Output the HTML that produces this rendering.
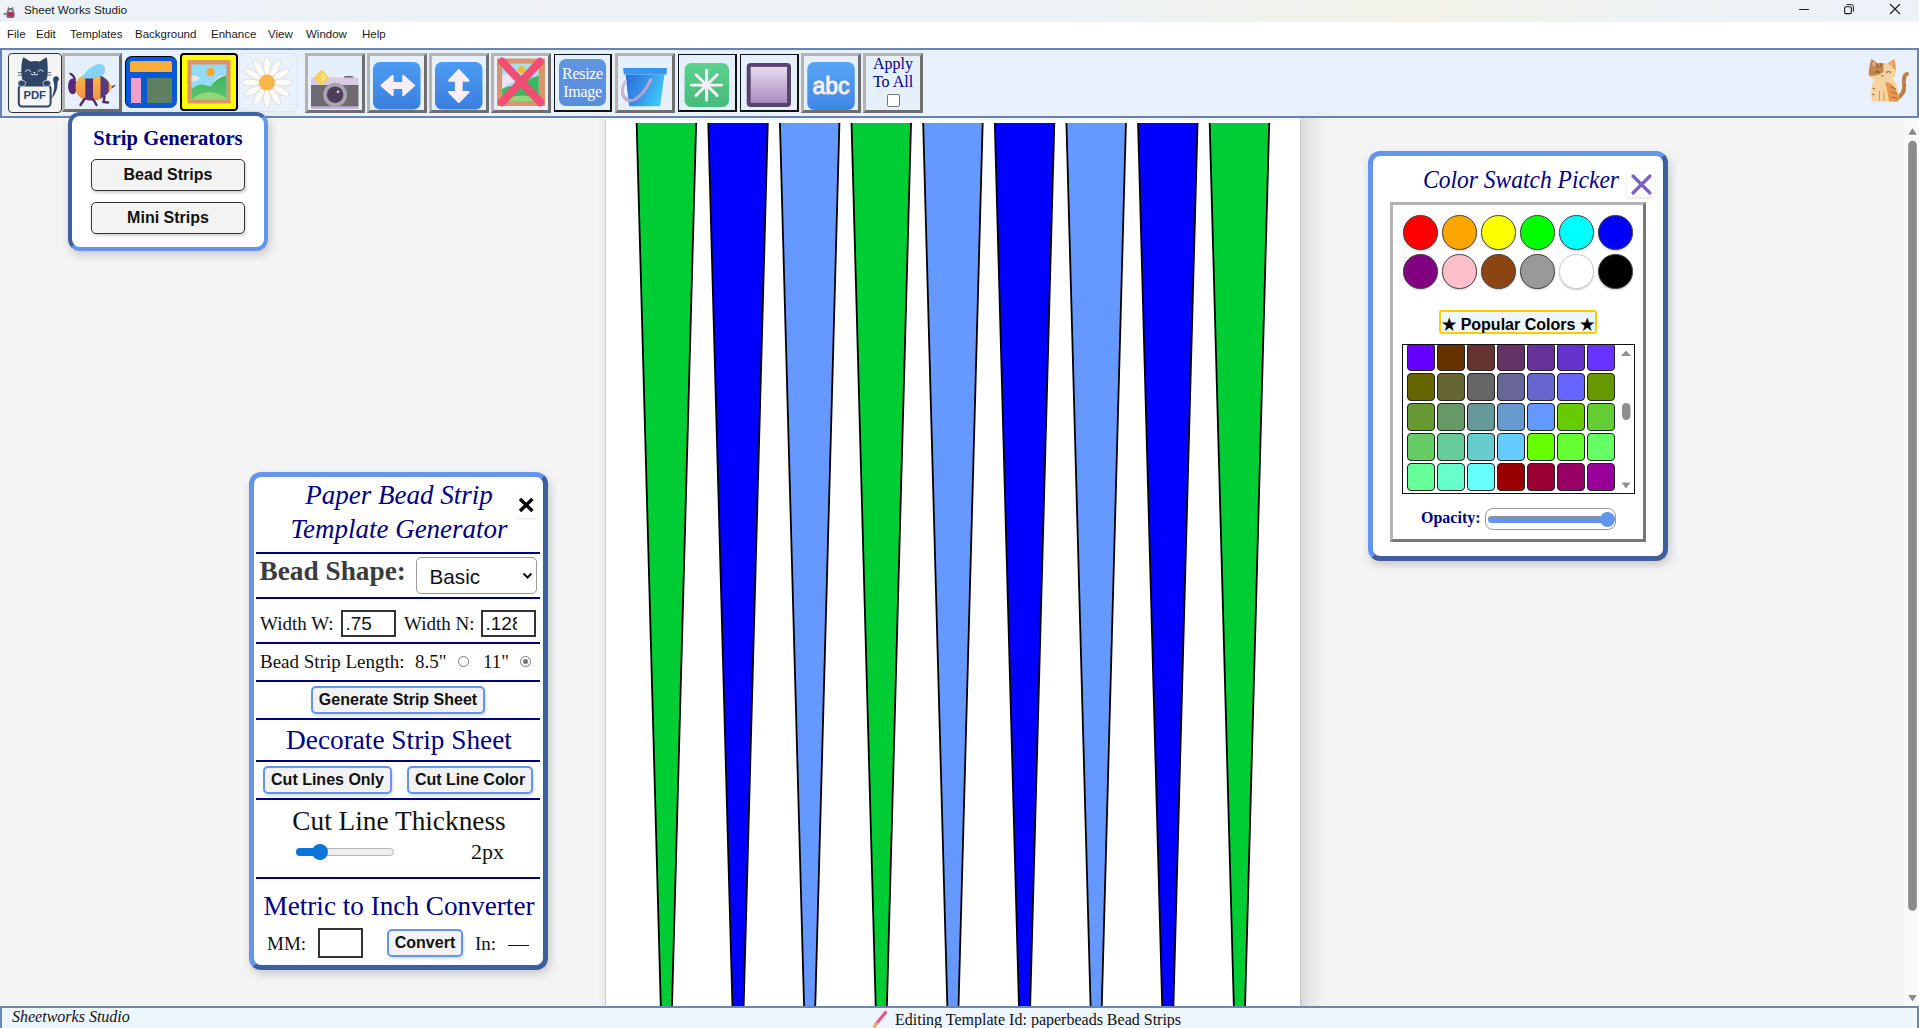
<!DOCTYPE html>
<html><head><meta charset="utf-8">
<style>
*{box-sizing:border-box;margin:0;padding:0}
html,body{width:1919px;height:1028px;overflow:hidden;background:#f4f4f4;font-family:"Liberation Sans",sans-serif;position:relative}
.abs{position:absolute}
#title{left:0;top:0;width:1919px;height:22px;background:linear-gradient(90deg,#edf2f8 0%,#eef2f6 55%,#f2f2e8 74%,#eef3f6 88%,#ecf2f8 100%)}
#title .t{left:24px;top:3px;font-size:11.7px;color:#1a1a1a}
#menu{left:0;top:22px;width:1919px;height:26px;background:#fff}
#menu span{position:absolute;top:5.5px;font-size:11.5px;color:#1a1a1a}
#toolbar{left:0;top:48px;width:1919px;height:70px;background:#e7f0fb;border:2px solid #6884ae}
.btn{position:absolute;top:53px;width:60px;height:60px;background:#e6f0fb}
.out{border:3px solid;border-color:#b3b3b3 #6e6e6e #6e6e6e #b3b3b3}
.blk{border:2px solid #111}
#page{left:605px;top:120px;width:696px;height:900px;background:#fff;border-left:1px solid #cfcfcf;border-right:1px solid #c4c4c4;overflow:hidden}
#pshl{left:598px;top:118px;width:7px;height:900px;background:linear-gradient(90deg,rgba(0,0,0,0),rgba(0,0,0,.045))}
#pshr{left:1301px;top:118px;width:32px;height:900px;background:linear-gradient(90deg,rgba(0,0,0,.11),rgba(0,0,0,.05) 30%,rgba(0,0,0,.015) 65%,rgba(0,0,0,0) 90%)}
#status{left:0;top:1006px;width:1919px;height:24px;background:#eef6fd;border:2px solid #6a87ad;border-bottom:none}
.serif{font-family:"Liberation Serif",serif}
.panel{position:absolute;background:#fff;border-radius:12px;box-shadow:2px 4px 10px rgba(0,0,0,.18)}
.hr{position:absolute;height:2px;background:#000080}
.pbtn{position:absolute;background:#f2f2f2;border:2px solid #6495ed;border-radius:5px;font-weight:bold;font-size:16px;color:#111;text-align:center;box-shadow:1px 2px 3px rgba(0,0,0,.15)}
</style></head><body>
<div id="title" class="abs">
  <div class="abs t">Sheet Works Studio</div>
</div>
<div id="menu" class="abs">
  <span style="left:7px">File</span>
  <span style="left:36px">Edit</span>
  <span style="left:70px">Templates</span>
  <span style="left:135px">Background</span>
  <span style="left:211px">Enhance</span>
  <span style="left:268px">View</span>
  <span style="left:306px">Window</span>
  <span style="left:362px">Help</span>
</div>
<div id="toolbar" class="abs"></div>
<!-- PDF cat -->
<div class="abs" style="left:8px;top:53px;width:54px;height:60px;background:#f4f4f4;border:1.5px solid #333;border-radius:4px"></div>
<svg class="abs" style="left:8px;top:53px" width="54" height="60" viewBox="0 0 54 60">
 <g fill="#2e4566">
  <path d="M17.8,32 C14.5,29.5 13.2,24 13.3,18 C13.3,13 13.8,8 14.9,5 C15.2,4.3 15.8,4.3 16.3,4.7 L22.5,8.5 C25.5,7.7 28.8,7.7 31.8,8.5 L37.5,4.7 C38,4.3 38.6,4.4 38.8,5 C39.6,8 39.8,13 39.7,18 C39.8,24 38.5,29.5 35.4,32 Z"/>
  <ellipse cx="13.8" cy="30.6" rx="3.8" ry="3.3"/>
  <ellipse cx="38.7" cy="30.6" rx="3.8" ry="3.3"/>
  <path d="M42.8,46 C46.5,39 46.8,33 45.5,28.5 C44.2,25.5 46.5,22.5 49.2,23.5 C51.5,24.5 51.5,27.5 49.5,28.5 C49.8,34 48.5,41 42.8,46 Z"/>
 </g>
 <g fill="none" stroke="#c9ced8" stroke-width="1.1" stroke-linecap="round">
  <path d="M17.6,18.3 Q20,15.2 22.4,18.3"/><path d="M30.3,18.3 Q32.7,15.2 35.1,18.3"/>
  <path d="M23.2,21 Q24.8,22.6 26.4,21.2 Q28,22.6 29.6,21"/>
 </g>
 <path d="M25.2,19 L27.6,19 L26.4,21 Z" fill="#e0e4ea"/>
 <g stroke="#2e4566" stroke-width="0.8"><path d="M9.8,19.5 L13.5,19.7 M9.8,22.3 L13.5,21.9 M39.5,19.7 L43.2,19.5 M39.5,21.9 L43.2,22.3"/></g>
 <rect x="10.8" y="32.6" width="31.8" height="20.8" rx="3.2" fill="#f4f4f4" stroke="#2e4566" stroke-width="2"/>
 <ellipse cx="13.8" cy="30.4" rx="3.9" ry="3.1" fill="#2e4566" stroke="#f4f4f4" stroke-width="0.7"/>
 <ellipse cx="38.7" cy="30.4" rx="3.9" ry="3.1" fill="#2e4566" stroke="#f4f4f4" stroke-width="0.7"/>
 <text x="26.7" y="45.6" text-anchor="middle" font-family="Liberation Sans" font-weight="bold" font-size="11.3" fill="#2e4566">PDF</text>
</svg>
<!-- bee -->
<div class="btn out" style="left:62px;width:60px;height:59px;top:53px"></div>
<svg class="abs" style="left:62px;top:53px" width="60" height="60" viewBox="0 0 60 60">
 <defs>
  <linearGradient id="by" x1="0" y1="0" x2="0" y2="1"><stop offset="0" stop-color="#f7c23c"/><stop offset="1" stop-color="#f48a50"/></linearGradient>
  <clipPath id="bc"><path d="M13.5,34 C13.5,25 20,21 30,21 C40,21 45,26 50.5,34 C45,42 40,47.5 30,47.5 C20,47.5 13.5,43 13.5,34 Z"/></clipPath>
 </defs>
 <path d="M8.4,20.7 Q11.5,22 12.9,26" stroke="#4a2a6a" stroke-width="2.2" fill="none" stroke-linecap="round"/>
 <ellipse cx="10.6" cy="33.3" rx="4.6" ry="7.9" fill="#5a2a7a"/>
 <g clip-path="url(#bc)">
  <rect x="10" y="18" width="45" height="32" fill="url(#by)"/>
  <rect x="23.3" y="18" width="7.7" height="32" fill="#54307a"/>
  <rect x="38.5" y="18" width="8.2" height="32" fill="#5a3a78"/>
 </g>
 <path d="M50,33 L54,31.5 L50.5,35.5 Z" fill="#4a2a6a"/>
 <path d="M20,25 C23,18 30,12 37,11 C42.5,10.5 44,14.5 42.5,19.5 C40.5,24.5 30,26.5 20,25 Z" fill="#84d2f6"/>
 <g stroke="#4a2a6a" stroke-width="2.4" stroke-linecap="round" fill="none">
  <path d="M22.5,46 L18.5,52"/><path d="M31,46 L34.5,52"/><path d="M42.5,44 L41.5,49 L46,49.5"/>
 </g>
</svg>
<!-- layout -->
<div class="abs" style="left:125px;top:56px;width:52px;height:52px;background:#0a58d6;border-radius:7px;border-left:1px solid #000;border-top:1px solid #000"></div>
<div class="abs" style="left:130px;top:61px;width:42px;height:11px;background:#f9ac3a;border-radius:2px 2px 0 0"></div>
<div class="abs" style="left:130.5px;top:77.5px;width:10.5px;height:25px;background:#f0a0c8"></div>
<div class="abs" style="left:146.5px;top:77.5px;width:25.5px;height:25px;background:#5e8060"></div>
<!-- image yellow -->
<div class="abs" style="left:180px;top:53px;width:58px;height:58px;background:#ffff00;border:2.5px solid #000;border-radius:4px"></div>
<svg class="abs" style="left:187px;top:60px" width="44" height="44" viewBox="0 0 44 44">
 <defs><linearGradient id="hill" x1="0" y1="0" x2="0" y2="1"><stop offset="0" stop-color="#3fb660"/><stop offset="1" stop-color="#5cc46f"/></linearGradient></defs>
 <rect x="0.5" y="0" width="43" height="43.5" fill="#dc946c"/>
 <rect x="4.5" y="4.5" width="35" height="35" fill="#92dcf5"/>
 <circle cx="23.5" cy="12" r="4" fill="#f7a72a"/>
 <path d="M4.5,16 Q9,14 13,18 Q10,22 4.5,21 Z" fill="#ece3f3"/>
 <path d="M27,21 Q32,14 39.5,16 L39.5,20 Q33,19 29,24 Z" fill="#ece3f3"/>
 <path d="M4.5,29 Q12,23 18,25 Q22,27 24,26 Q30,17 39.5,15.5 L39.5,39.5 L4.5,39.5 Z" fill="url(#hill)"/>
 <path d="M4.5,39.5 Q20,26 39.5,38 L39.5,39.5 Z" fill="#8ed878"/>
</svg>
<!-- daisy -->
<div class="abs" style="left:240px;top:53.5px;width:56px;height:57.5px;background:#e9f1fb;border-radius:4px;box-shadow:0 0 2px rgba(0,0,0,.15)"></div>
<svg class="abs" style="left:240px;top:54px" width="56" height="58" viewBox="0 0 56 58">
 <g transform="translate(27,28.6)" fill="#fdfbf7" stroke="#d8d4d4" stroke-width="0.7">
  <ellipse cx="0" cy="-16" rx="3.4" ry="9.5"/>
  <ellipse cx="0" cy="-16" rx="3.4" ry="9.5" transform="rotate(30)"/>
  <ellipse cx="0" cy="-16" rx="3.4" ry="9.5" transform="rotate(60)"/>
  <ellipse cx="0" cy="-16" rx="3.4" ry="9.5" transform="rotate(90)"/>
  <ellipse cx="0" cy="-16" rx="3.4" ry="9.5" transform="rotate(120)"/>
  <ellipse cx="0" cy="-16" rx="3.4" ry="9.5" transform="rotate(150)"/>
  <ellipse cx="0" cy="-16" rx="3.4" ry="9.5" transform="rotate(180)"/>
  <ellipse cx="0" cy="-16" rx="3.4" ry="9.5" transform="rotate(210)"/>
  <ellipse cx="0" cy="-16" rx="3.4" ry="9.5" transform="rotate(240)"/>
  <ellipse cx="0" cy="-16" rx="3.4" ry="9.5" transform="rotate(270)"/>
  <ellipse cx="0" cy="-16" rx="3.4" ry="9.5" transform="rotate(300)"/>
  <ellipse cx="0" cy="-16" rx="3.4" ry="9.5" transform="rotate(330)"/>
  <circle r="8" fill="#f8b648" stroke="none"/>
 </g>
</svg>
<!-- camera -->
<div class="btn out" style="left:305px"></div>
<svg class="abs" style="left:305px;top:53px" width="60" height="60" viewBox="0 0 60 60">
 <rect x="39" y="23" width="9.5" height="3.5" rx="1.5" fill="#6d6470"/>
 <rect x="6" y="24.5" width="47.5" height="8.5" rx="2" fill="#d6cbe0"/>
 <rect x="6" y="32" width="47.5" height="21.8" fill="#6e6a72"/>
 <rect x="6" y="53.5" width="47.5" height="2.5" rx="1" fill="#c8b3dc"/>
 <circle cx="30.1" cy="41.7" r="12" fill="#aaa4b0"/>
 <circle cx="30.1" cy="41.7" r="8.3" fill="#4d3f5c"/>
 <circle cx="33" cy="38.8" r="1.3" fill="#e8e0f0"/>
 <path d="M16.5,17.8 L23.5,24.8 L16.5,31.8 L9.5,24.8 Z" fill="#f5d05a" stroke="#f5d05a" stroke-width="1.6" stroke-linejoin="round"/><path d="M16.5,19.5 L21.5,24.8 L16.5,30 Z" fill="#f9e07a"/>
</svg>
<!-- LR arrows -->
<div class="btn out" style="left:367px"></div>
<svg class="abs" style="left:367px;top:53px" width="60" height="60" viewBox="0 0 60 60">
 <defs><linearGradient id="bl" x1="0" y1="0" x2="0" y2="1"><stop offset="0" stop-color="#4b9cf2"/><stop offset="1" stop-color="#3a7fe0"/></linearGradient></defs>
 <rect x="6" y="9" width="47.5" height="47.5" rx="7" fill="url(#bl)"/>
 <path d="M14.5,32.5 L25.5,23 L25.5,30.2 L36.3,30.2 L36.3,23 L47,32.5 L36.3,42 L36.3,35 L25.5,35 L25.5,42 Z" fill="#fbeef6" stroke="#fbeef6" stroke-width="2.2" stroke-linejoin="round"/>
</svg>
<!-- UD arrows -->
<div class="btn out" style="left:429px"></div>
<svg class="abs" style="left:429px;top:53px" width="60" height="60" viewBox="0 0 60 60">
 <rect x="6" y="9" width="47.5" height="47.5" rx="7" fill="url(#bl)"/>
 <path d="M29.8,17.2 L39.5,27.6 L32.6,27.6 L32.6,39 L39.5,39 L29.8,49 L20.1,39 L27,39 L27,27.6 L20.1,27.6 Z" fill="#fbeef6" stroke="#fbeef6" stroke-width="2.2" stroke-linejoin="round"/>
</svg>
<!-- X image -->
<div class="btn out" style="left:491px"></div>
<svg class="abs" style="left:491px;top:53px" width="60" height="60" viewBox="0 0 60 60">
 <rect x="6" y="5.5" width="48" height="47.5" fill="#dc946c"/>
 <rect x="11.2" y="10.6" width="36.5" height="37.6" fill="#a8def5"/>
 <path d="M11.2,22 Q20,18 30,24 L11.2,36 Z" fill="#e8e4f4"/>
 <circle cx="30.5" cy="16.6" r="3.6" fill="#f7b52a"/>
 <path d="M11.2,36 Q20,31 27,34 Q36,26 47.7,22.5 L47.7,48.2 L11.2,48.2 Z" fill="#3fb660"/>
 <path d="M11.2,48.2 Q28,38 47.7,46 L47.7,48.2 Z" fill="#8ed878"/>
 <path d="M11,8.6 L49.3,49.3 M48.8,8.8 L11,49.3" stroke="#f24d72" stroke-width="8" stroke-linecap="round"/>
</svg>
<!-- resize -->
<div class="abs blk" style="left:553.5px;top:54px;width:58.5px;height:58px;background:#e6f0fb;border-width:1px 2px 2px 1px"></div>
<div class="abs serif" style="left:559px;top:58.5px;width:47px;height:47px;background:linear-gradient(180deg,#6095e3,#5a8ddc);border-radius:7px;color:#fff;font-size:16px;line-height:18px;text-align:center;padding-top:6.5px;letter-spacing:-0.3px">Resize<br>Image</div>
<!-- bucket -->
<div class="btn out" style="left:615px"></div>
<svg class="abs" style="left:615px;top:53px" width="60" height="60" viewBox="0 0 60 60">
 <defs><linearGradient id="bk" x1="0" y1="0" x2="1" y2="0.35"><stop offset="0" stop-color="#2a6ed6"/><stop offset="0.5" stop-color="#3690e6"/><stop offset="1" stop-color="#3fc4f8"/></linearGradient>
 <linearGradient id="bh" x1="0" y1="0" x2="1" y2="1"><stop offset="0" stop-color="#d0c4d8"/><stop offset="1" stop-color="#b08ec8"/></linearGradient></defs>
 <path d="M10.6,21.6 L49.5,21.6 L45,53.3 L14.1,53.3 Z" fill="url(#bk)"/>
 <path d="M8,15 L52,15 L51.5,21.6 L8.8,21.6 Z" fill="#3a96ea"/>
 <path d="M35.9,26.7 C32,35 28,42 20,46.5 C14,49.5 8.5,46 7.5,40 C7,35 8.5,31 10.6,28.6" stroke="url(#bh)" stroke-width="3" fill="none" stroke-linecap="round"/>
</svg>
<!-- asterisk -->
<div class="abs blk" style="left:678px;top:54px;width:58.5px;height:58px;background:#e6f0fb;border-width:1px 2px 2px 1px"></div>
<svg class="abs" style="left:678px;top:54px" width="59" height="58" viewBox="0 0 59 58">
 <defs><linearGradient id="gr" x1="0" y1="0" x2="0" y2="1"><stop offset="0" stop-color="#5cd08e"/><stop offset="1" stop-color="#46bb7c"/></linearGradient></defs>
 <rect x="6.6" y="9" width="44.5" height="44" rx="6.5" fill="url(#gr)"/>
 <g stroke="#fdeef8" stroke-width="2.9" stroke-linecap="round">
  <path d="M28.6,16.3 L28.6,46.3 M13.6,31.1 L43.6,31.1 M18,20.8 L39.2,41.4 M39.2,20.8 L18,41.4"/>
 </g>
</svg>
<!-- square -->
<div class="abs blk" style="left:740px;top:54px;width:58.5px;height:58px;background:#e6f0fb;border-width:1px 2px 2px 1px"></div>
<svg class="abs" style="left:740px;top:54px" width="59" height="58" viewBox="0 0 59 58">
 <defs><linearGradient id="sq" x1="0" y1="0" x2="0" y2="1"><stop offset="0" stop-color="#e8dcee"/><stop offset="1" stop-color="#a98cc2"/></linearGradient></defs>
 <rect x="6.7" y="8.9" width="44.3" height="44" rx="4" fill="#57436e"/>
 <rect x="10.7" y="12.9" width="36.3" height="36" fill="url(#sq)"/>
</svg>
<!-- abc -->
<div class="btn out" style="left:801px"></div>
<svg class="abs" style="left:801px;top:53px" width="60" height="60" viewBox="0 0 60 60">
 <defs><linearGradient id="ab" x1="0" y1="0" x2="0" y2="1"><stop offset="0" stop-color="#58a6f6"/><stop offset="1" stop-color="#3f86e6"/></linearGradient></defs>
 <rect x="6.3" y="9" width="47.5" height="48" rx="7" fill="url(#ab)"/>
 <text x="30" y="40.6" text-anchor="middle" font-family="Liberation Sans" font-size="23" fill="#fdf0f6" stroke="#fdf0f6" stroke-width="0.9">abc</text>
</svg>
<!-- apply to all -->
<div class="btn out" style="left:863px"></div>
<div class="abs serif" style="left:863px;top:54.5px;width:60px;text-align:center;font-size:16px;line-height:18px;color:#000080">Apply<br>To All</div>
<div class="abs" style="left:887px;top:94px;width:13px;height:13px;border:1px solid #767676;border-radius:2px;background:#fff"></div>
<!-- cat right -->
<svg class="abs" style="left:1862px;top:54px" width="50" height="52" viewBox="0 0 50 52">
 <path d="M33,45 C40,43 43,36 42,30 C41.3,25 42,21 45,20" stroke="#c0844a" stroke-width="4" fill="none" stroke-linecap="round"/>
 <path d="M40.5,38 L43.5,37 M41.5,31 L44,30.5 M41.5,25 L44,24.5" stroke="#9a6030" stroke-width="1"/>
 <path d="M10,47.5 C8.5,40 9,32 12.5,25 L31,25 C35.5,30 37,40 36.5,47.5 Z" fill="#f6d3a0"/>
 <path d="M23,28 C32,28 36.5,38 36.5,47.5 L27,47.5 C26,40 24.5,33 23,28 Z" fill="#e8964e"/>
 <path d="M29,33 L34,35 M30,38 L35.5,40 M30,43 L36,44.5 M10.5,34 L13,35 M10,40 L12.5,41" stroke="#a86a38" stroke-width="1.1"/>
 <path d="M17.5,37 L17.5,47 M22,37 L22,47" stroke="#c8925a" stroke-width="0.9"/>
 <path d="M6.8,19.4 C6.8,14 8,10 9.5,5 L16,9.5 C19,8.8 23,8.8 26,9.5 L32.2,5 C33.5,10 33.8,14 33.8,19.4 C33.5,24 28,26.5 20.3,26.5 C12.5,26.5 7,24 6.8,19.4 Z" fill="#f4d3a2"/>
 <path d="M6.8,19.4 C6.8,14 8,10 9.5,5 L16,9.5 C18,9 20,9 21.5,9.2 L21.5,18 Q16,22 7.2,22 Z" fill="#c08850"/>
 <path d="M26,9.5 L32.2,5 C33.5,10 33.8,14 33.6,17 C31,13.5 28.5,11 26,9.5 Z" fill="#ec9a50"/>
 <path d="M10.5,7.5 L14,10 L11,13 Z M31,7.5 L27.8,10 L30.8,13 Z" fill="#f0b0a0"/>
 <path d="M15,10 L16,14 M18.5,9.5 L19,13" stroke="#8a5a30" stroke-width="1"/>
 <path d="M13,18.5 Q15.5,16.5 18,18.5 M24,18.5 Q26.5,16.5 29,18.5" stroke="#6a4020" stroke-width="0.9" fill="none"/>
 <path d="M19,21.5 Q20.3,23 21.6,21.5" stroke="#6a4020" stroke-width="0.9" fill="none"/>
</svg>
<div id="pshl" class="abs"></div><div id="pshr" class="abs"></div><div id="page" class="abs"><svg class="abs" style="left:-1px;top:3px" width="695" height="897" viewBox="0 0 695 897"><g stroke="#000" stroke-width="1.8"><polygon points="31.51,-5 91.29,-5 64.18,986 58.62,986" fill="#00cc33"/>
<polygon points="103.14,-5 162.92,-5 135.81,986 130.25,986" fill="#0000ff"/>
<polygon points="174.77,-5 234.55,-5 207.44,986 201.88,986" fill="#6699ff"/>
<polygon points="246.40,-5 306.18,-5 279.07,986 273.51,986" fill="#00cc33"/>
<polygon points="318.03,-5 377.81,-5 350.70,986 345.14,986" fill="#6699ff"/>
<polygon points="389.66,-5 449.44,-5 422.33,986 416.77,986" fill="#0000ff"/>
<polygon points="461.29,-5 521.07,-5 493.96,986 488.40,986" fill="#6699ff"/>
<polygon points="532.92,-5 592.70,-5 565.59,986 560.03,986" fill="#0000ff"/>
<polygon points="604.55,-5 664.33,-5 637.22,986 631.66,986" fill="#00cc33"/></g></svg></div>
<!-- strip generators -->
<div class="panel" style="left:68px;top:112px;width:200px;height:139px;border:4.5px solid;border-color:#3f62a0 #6495ed #6495ed #3f62a0"></div>
<div class="abs serif" style="left:68px;top:127px;width:200px;text-align:center;font-weight:bold;font-size:20.6px;color:#000080">Strip Generators</div>
<div class="abs" style="left:91px;top:159px;width:154px;height:32px;background:#f3f3f3;border:1px solid #333;border-radius:5px;box-shadow:1px 2px 3px rgba(0,0,0,.18);font-weight:bold;font-size:16px;line-height:29px;text-align:center;color:#111">Bead Strips</div>
<div class="abs" style="left:91px;top:202px;width:154px;height:32px;background:#f3f3f3;border:1px solid #333;border-radius:5px;box-shadow:1px 2px 3px rgba(0,0,0,.18);font-weight:bold;font-size:16px;line-height:29px;text-align:center;color:#111">Mini Strips</div>

<!-- bead generator panel -->
<div class="panel" style="left:249px;top:472px;width:299px;height:498px;border:5px solid;border-color:#6495ed #3d5f9c #3d5f9c #6495ed"></div>
<div class="abs serif" style="left:254px;top:478px;width:290px;text-align:center;font-style:italic;font-size:27px;line-height:34px;color:#000080;padding-right:0px">Paper Bead Strip<br>Template Generator</div>
<div class="abs" style="left:516.5px;top:490px;width:19px;height:28px;background:#fff;border-radius:2px;box-shadow:0 1px 2px rgba(0,0,0,.12)"></div><svg class="abs" style="left:516px;top:490px" width="20" height="28" viewBox="0 0 20 28"><path d="M4,9 L16.4,21 M16.4,9 L4,21" stroke="#000" stroke-width="3.3"/></svg>
<div class="hr" style="left:256px;top:552px;width:284px"></div>
<div class="abs serif" style="left:259.5px;top:555.5px;font-weight:bold;font-size:27.3px;color:#3c3c3c">Bead Shape:</div>
<div class="abs" style="left:416px;top:557px;width:121px;height:37px;border:1px solid #9a9a9a;border-radius:5px;background:#fff;font-size:20.7px;line-height:37px;padding-left:12.5px;color:#111">Basic
 <svg class="abs" style="right:3px;top:14px" width="11" height="8" viewBox="0 0 11 8"><path d="M1.5,1.5 L5.5,5.5 L9.5,1.5" stroke="#111" stroke-width="2" fill="none"/></svg>
</div>
<div class="hr" style="left:256px;top:597px;width:284px"></div>
<div class="abs serif" style="left:260px;top:613px;font-size:19px;color:#111">Width W:</div>
<div class="abs" style="left:341px;top:610px;width:55px;height:27px;border:2px solid #333;background:#fff;font-size:19px;line-height:24px;padding-left:2.5px;color:#111">.75</div>
<div class="abs serif" style="left:404px;top:613px;font-size:19px;color:#111">Width N:</div>
<div class="abs" style="left:481px;top:610px;width:55px;height:27px;border:2px solid #333;background:#fff;font-size:19px;line-height:24px;padding-left:2.5px;color:#111;overflow:hidden;white-space:nowrap"><div style="width:31.5px;overflow:hidden">.128</div></div>
<div class="hr" style="left:256px;top:642px;width:284px"></div>
<div class="abs serif" style="left:260px;top:651px;font-size:19px;color:#111;white-space:nowrap">Bead Strip Length:</div><div class="abs serif" style="left:415px;top:651px;font-size:19px;color:#111">8.5"</div>
<div class="abs" style="left:458px;top:656px;width:11px;height:11px;border:1px solid #767676;border-radius:50%;background:#fff"></div>
<div class="abs serif" style="left:483px;top:651px;font-size:19px;color:#111">11"</div>
<div class="abs" style="left:520px;top:656px;width:11px;height:11px;border:1px solid #767676;border-radius:50%;background:#fff"><div class="abs" style="left:2px;top:2px;width:5px;height:5px;border-radius:50%;background:#767676"></div></div>
<div class="hr" style="left:256px;top:680px;width:284px"></div>
<div class="pbtn" style="left:311px;top:686px;width:174px;height:28px;line-height:24px">Generate Strip Sheet</div>
<div class="hr" style="left:256px;top:718px;width:284px"></div>
<div class="abs serif" style="left:254px;top:725px;width:290px;text-align:center;font-size:27.3px;color:#000080">Decorate Strip Sheet</div>
<div class="hr" style="left:256px;top:760px;width:284px"></div>
<div class="pbtn" style="left:263px;top:766px;width:129px;height:28px;line-height:24px">Cut Lines Only</div>
<div class="pbtn" style="left:407px;top:766px;width:126px;height:28px;line-height:24px">Cut Line Color</div>
<div class="hr" style="left:256px;top:798px;width:284px"></div>
<div class="abs serif" style="left:254px;top:806px;width:290px;text-align:center;font-size:27.3px;color:#111">Cut Line Thickness</div>
<div class="abs" style="left:296px;top:848px;width:98px;height:8px;border:1px solid #b8b8b8;border-radius:4px;background:#efefef"></div>
<div class="abs" style="left:296px;top:848px;width:25px;height:8px;border-radius:4px 0 0 4px;background:#0b75d9"></div>
<div class="abs" style="left:312px;top:844px;width:16px;height:16px;border-radius:50%;background:#0b75d9"></div>
<div class="abs serif" style="left:471px;top:839px;font-size:22px;color:#111">2px</div>
<div class="hr" style="left:256px;top:877px;width:284px"></div>
<div class="abs serif" style="left:254px;top:891px;width:290px;text-align:center;font-size:27.2px;color:#000080;white-space:nowrap">Metric to Inch Converter</div>
<div class="abs serif" style="left:267px;top:932.5px;font-size:19px;color:#111">MM:</div>
<div class="abs" style="left:318px;top:928px;width:45px;height:30px;border:2px solid #333;background:#fff"></div>
<div class="pbtn" style="left:387px;top:929px;width:76px;height:28px;line-height:24px">Convert</div>
<div class="abs serif" style="left:475px;top:932.5px;font-size:19px;color:#111">In:</div>
<div class="abs" style="left:508px;top:945px;width:21px;height:1.3px;background:#111"></div>

<!-- color swatch picker -->
<div class="panel" style="left:1368px;top:151px;width:300px;height:410px;border:5px solid;border-color:#6495ed #3d5f9c #3d5f9c #6495ed"></div>
<div class="abs serif" style="left:1375.5px;top:165px;width:290px;text-align:center;font-style:italic;font-size:26px;color:#000080;transform:scaleX(0.905);transform-origin:145px 0">Color Swatch Picker</div>
<div class="abs" style="left:1627px;top:169px;width:28px;height:28px;background:#fff;border-radius:3px;box-shadow:0 1px 3px rgba(0,0,0,.15)"></div>
<svg class="abs" style="left:1627px;top:169px" width="28" height="28" viewBox="0 0 28 28"><path d="M6,7 L23,24 M23,7 L6,24" stroke="#7b5fcc" stroke-width="3.2" stroke-linecap="round"/></svg>
<div class="abs" style="left:1390px;top:202px;width:256px;height:340px;border:3px solid;border-color:#b4b4b4 #777 #777 #b4b4b4;background:#fff"></div>
<div class="abs" style="left:1403.3px;top:215px;width:34.5px;height:34.5px;border-radius:50%;background:#ff0000;border:1px solid #444;box-shadow:0 1px 2px rgba(0,0,0,.2)"></div>
<div class="abs" style="left:1442.3px;top:215px;width:34.5px;height:34.5px;border-radius:50%;background:#ffa500;border:1px solid #444;box-shadow:0 1px 2px rgba(0,0,0,.2)"></div>
<div class="abs" style="left:1481.3px;top:215px;width:34.5px;height:34.5px;border-radius:50%;background:#ffff00;border:1px solid #444;box-shadow:0 1px 2px rgba(0,0,0,.2)"></div>
<div class="abs" style="left:1520.3px;top:215px;width:34.5px;height:34.5px;border-radius:50%;background:#00ff00;border:1px solid #444;box-shadow:0 1px 2px rgba(0,0,0,.2)"></div>
<div class="abs" style="left:1559.3px;top:215px;width:34.5px;height:34.5px;border-radius:50%;background:#00ffff;border:1px solid #444;box-shadow:0 1px 2px rgba(0,0,0,.2)"></div>
<div class="abs" style="left:1598.3px;top:215px;width:34.5px;height:34.5px;border-radius:50%;background:#0000ff;border:1px solid #444;box-shadow:0 1px 2px rgba(0,0,0,.2)"></div>
<div class="abs" style="left:1403.3px;top:254px;width:34.5px;height:34.5px;border-radius:50%;background:#800080;border:1px solid #444;box-shadow:0 1px 2px rgba(0,0,0,.2)"></div>
<div class="abs" style="left:1442.3px;top:254px;width:34.5px;height:34.5px;border-radius:50%;background:#ffc0cb;border:1px solid #444;box-shadow:0 1px 2px rgba(0,0,0,.2)"></div>
<div class="abs" style="left:1481.3px;top:254px;width:34.5px;height:34.5px;border-radius:50%;background:#8b4513;border:1px solid #444;box-shadow:0 1px 2px rgba(0,0,0,.2)"></div>
<div class="abs" style="left:1520.3px;top:254px;width:34.5px;height:34.5px;border-radius:50%;background:#999999;border:1px solid #444;box-shadow:0 1px 2px rgba(0,0,0,.2)"></div>
<div class="abs" style="left:1559.3px;top:254px;width:34.5px;height:34.5px;border-radius:50%;background:#ffffff;border:1px solid #ccc;box-shadow:0 1px 2px rgba(0,0,0,.2)"></div>
<div class="abs" style="left:1598.3px;top:254px;width:34.5px;height:34.5px;border-radius:50%;background:#000000;border:1px solid #444;box-shadow:0 1px 2px rgba(0,0,0,.2)"></div>
<div class="abs" style="left:1439px;top:310px;width:158px;height:24px;border:2.5px solid #ffcc00;border-radius:3px;background:#eef6fd;font-weight:bold;font-size:16px;line-height:25px;text-align:center;color:#000;white-space:nowrap">&#x2605; Popular Colors &#x2605;</div>
<div class="abs" style="left:1402px;top:344px;width:233px;height:150px;border:1px solid #111;background:#fff;overflow:hidden">
 <div class="abs" style="left:4.2px;top:-2px;width:27.5px;height:27.5px;border-radius:4px;background:#6600ff;border:1px solid #222"></div>
<div class="abs" style="left:34.2px;top:-2px;width:27.5px;height:27.5px;border-radius:4px;background:#663300;border:1px solid #222"></div>
<div class="abs" style="left:64.2px;top:-2px;width:27.5px;height:27.5px;border-radius:4px;background:#663333;border:1px solid #222"></div>
<div class="abs" style="left:94.2px;top:-2px;width:27.5px;height:27.5px;border-radius:4px;background:#663366;border:1px solid #222"></div>
<div class="abs" style="left:124.2px;top:-2px;width:27.5px;height:27.5px;border-radius:4px;background:#663399;border:1px solid #222"></div>
<div class="abs" style="left:154.2px;top:-2px;width:27.5px;height:27.5px;border-radius:4px;background:#6633cc;border:1px solid #222"></div>
<div class="abs" style="left:184.2px;top:-2px;width:27.5px;height:27.5px;border-radius:4px;background:#6633ff;border:1px solid #222"></div>
<div class="abs" style="left:4.2px;top:28px;width:27.5px;height:27.5px;border-radius:4px;background:#666600;border:1px solid #222"></div>
<div class="abs" style="left:34.2px;top:28px;width:27.5px;height:27.5px;border-radius:4px;background:#666633;border:1px solid #222"></div>
<div class="abs" style="left:64.2px;top:28px;width:27.5px;height:27.5px;border-radius:4px;background:#666666;border:1px solid #222"></div>
<div class="abs" style="left:94.2px;top:28px;width:27.5px;height:27.5px;border-radius:4px;background:#666699;border:1px solid #222"></div>
<div class="abs" style="left:124.2px;top:28px;width:27.5px;height:27.5px;border-radius:4px;background:#6666cc;border:1px solid #222"></div>
<div class="abs" style="left:154.2px;top:28px;width:27.5px;height:27.5px;border-radius:4px;background:#6666ff;border:1px solid #222"></div>
<div class="abs" style="left:184.2px;top:28px;width:27.5px;height:27.5px;border-radius:4px;background:#669900;border:1px solid #222"></div>
<div class="abs" style="left:4.2px;top:58px;width:27.5px;height:27.5px;border-radius:4px;background:#669933;border:1px solid #222"></div>
<div class="abs" style="left:34.2px;top:58px;width:27.5px;height:27.5px;border-radius:4px;background:#669966;border:1px solid #222"></div>
<div class="abs" style="left:64.2px;top:58px;width:27.5px;height:27.5px;border-radius:4px;background:#669999;border:1px solid #222"></div>
<div class="abs" style="left:94.2px;top:58px;width:27.5px;height:27.5px;border-radius:4px;background:#6699cc;border:1px solid #222"></div>
<div class="abs" style="left:124.2px;top:58px;width:27.5px;height:27.5px;border-radius:4px;background:#6699ff;border:1px solid #222"></div>
<div class="abs" style="left:154.2px;top:58px;width:27.5px;height:27.5px;border-radius:4px;background:#66cc00;border:1px solid #222"></div>
<div class="abs" style="left:184.2px;top:58px;width:27.5px;height:27.5px;border-radius:4px;background:#66cc33;border:1px solid #222"></div>
<div class="abs" style="left:4.2px;top:88px;width:27.5px;height:27.5px;border-radius:4px;background:#66cc66;border:1px solid #222"></div>
<div class="abs" style="left:34.2px;top:88px;width:27.5px;height:27.5px;border-radius:4px;background:#66cc99;border:1px solid #222"></div>
<div class="abs" style="left:64.2px;top:88px;width:27.5px;height:27.5px;border-radius:4px;background:#66cccc;border:1px solid #222"></div>
<div class="abs" style="left:94.2px;top:88px;width:27.5px;height:27.5px;border-radius:4px;background:#66ccff;border:1px solid #222"></div>
<div class="abs" style="left:124.2px;top:88px;width:27.5px;height:27.5px;border-radius:4px;background:#66ff00;border:1px solid #222"></div>
<div class="abs" style="left:154.2px;top:88px;width:27.5px;height:27.5px;border-radius:4px;background:#66ff33;border:1px solid #222"></div>
<div class="abs" style="left:184.2px;top:88px;width:27.5px;height:27.5px;border-radius:4px;background:#66ff66;border:1px solid #222"></div>
<div class="abs" style="left:4.2px;top:118px;width:27.5px;height:27.5px;border-radius:4px;background:#66ff99;border:1px solid #222"></div>
<div class="abs" style="left:34.2px;top:118px;width:27.5px;height:27.5px;border-radius:4px;background:#66ffcc;border:1px solid #222"></div>
<div class="abs" style="left:64.2px;top:118px;width:27.5px;height:27.5px;border-radius:4px;background:#66ffff;border:1px solid #222"></div>
<div class="abs" style="left:94.2px;top:118px;width:27.5px;height:27.5px;border-radius:4px;background:#990000;border:1px solid #222"></div>
<div class="abs" style="left:124.2px;top:118px;width:27.5px;height:27.5px;border-radius:4px;background:#990033;border:1px solid #222"></div>
<div class="abs" style="left:154.2px;top:118px;width:27.5px;height:27.5px;border-radius:4px;background:#990066;border:1px solid #222"></div>
<div class="abs" style="left:184.2px;top:118px;width:27.5px;height:27.5px;border-radius:4px;background:#990099;border:1px solid #222"></div>

</div>
<div class="abs serif" style="left:1421px;top:509px;font-weight:bold;font-size:16px;color:#000080">Opacity:</div>
<div class="abs" style="left:1485px;top:508px;width:131px;height:22px;border:1px solid #9a9a9a;border-radius:8px;background:#fff"></div>
<div class="abs" style="left:1488px;top:515.5px;width:121px;height:7px;border-radius:3.5px;background:#6495ed;border-top:1px solid #9a8a88"></div>
<div class="abs" style="left:1599.5px;top:511.5px;width:15px;height:15px;border-radius:50%;background:#6495ed"></div>

<svg class="abs" style="left:1618px;top:345px" width="16" height="148" viewBox="0 0 16 148"><path d="M3,11 L8,5.5 L13,11 Z" fill="#909090"/><rect x="4" y="58" width="8.5" height="17" rx="4.2" fill="#8f8f8f"/><path d="M3.5,137.5 L8,143.5 L12.5,137.5 Z" fill="#909090"/></svg>

<!-- title icon -->
<svg class="abs" style="left:3px;top:4px" width="14" height="15" viewBox="0 0 14 15">
 <path d="M5,2 L6,4 L9,4 L10,2 L10.5,6 C12,8 12,12 11,14 L4,14 C3,12 3,8 4.5,6 Z" fill="#6f7a72"/>
 <ellipse cx="7.5" cy="10.5" rx="3.3" ry="2.2" fill="#c2246a"/>
 <rect x="0.5" y="9" width="3" height="2" fill="#8a8a8a"/>
 <ellipse cx="7.5" cy="7" rx="2" ry="1" fill="#d8d8d8"/>
</svg>
<!-- window controls -->
<div class="abs" style="left:1799px;top:9px;width:10px;height:1px;background:#1a1a1a"></div>
<svg class="abs" style="left:1842px;top:3px" width="13" height="13" viewBox="0 0 13 13">
 <rect x="2.6" y="3.8" width="6.8" height="6.8" rx="1.3" fill="none" stroke="#1a1a1a" stroke-width="1.1"/>
 <path d="M4.6,1.6 L9.3,1.6 Q11.4,1.6 11.4,3.7 L11.4,8.6" fill="none" stroke="#1a1a1a" stroke-width="1"/>
</svg>
<svg class="abs" style="left:1889px;top:3px" width="12" height="12" viewBox="0 0 12 12"><path d="M1,1 L11,11 M11,1 L1,11" stroke="#1a1a1a" stroke-width="1.1"/></svg>
<!-- right scrollbar -->
<div class="abs" style="left:1904px;top:118px;width:15px;height:888px;background:#fafafa"></div>
<svg class="abs" style="left:1904px;top:118px" width="15" height="888" viewBox="0 0 15 888">
 <path d="M4.2,16.7 L8.5,10 L12.8,16.7 Z" fill="#8b8b8b"/>
 <rect x="4.2" y="22.8" width="8.6" height="770" rx="4.3" fill="#8b8b8b"/>
 <path d="M4.2,877 L8.5,883.6 L12.8,877 Z" fill="#8b8b8b"/>
</svg>
<div id="status" class="abs"></div>
<!-- status -->
<div class="abs serif" style="left:12px;top:1008px;font-style:italic;font-size:16px;color:#111">Sheetworks Studio</div>
<svg class="abs" style="left:872px;top:1011px" width="16" height="17" viewBox="0 0 16 17">
 <path d="M13.5,1.5 L4,13" stroke="#ef4a8c" stroke-width="3" stroke-linecap="round"/>
 <path d="M4.5,12.5 L2.5,15.5" stroke="#f2a35c" stroke-width="3" stroke-linecap="round"/>
</svg>
<div class="abs serif" style="left:895px;top:1010.5px;font-size:16px;color:#111;white-space:nowrap">Editing Template Id: paperbeads Bead Strips</div>
</body></html>
